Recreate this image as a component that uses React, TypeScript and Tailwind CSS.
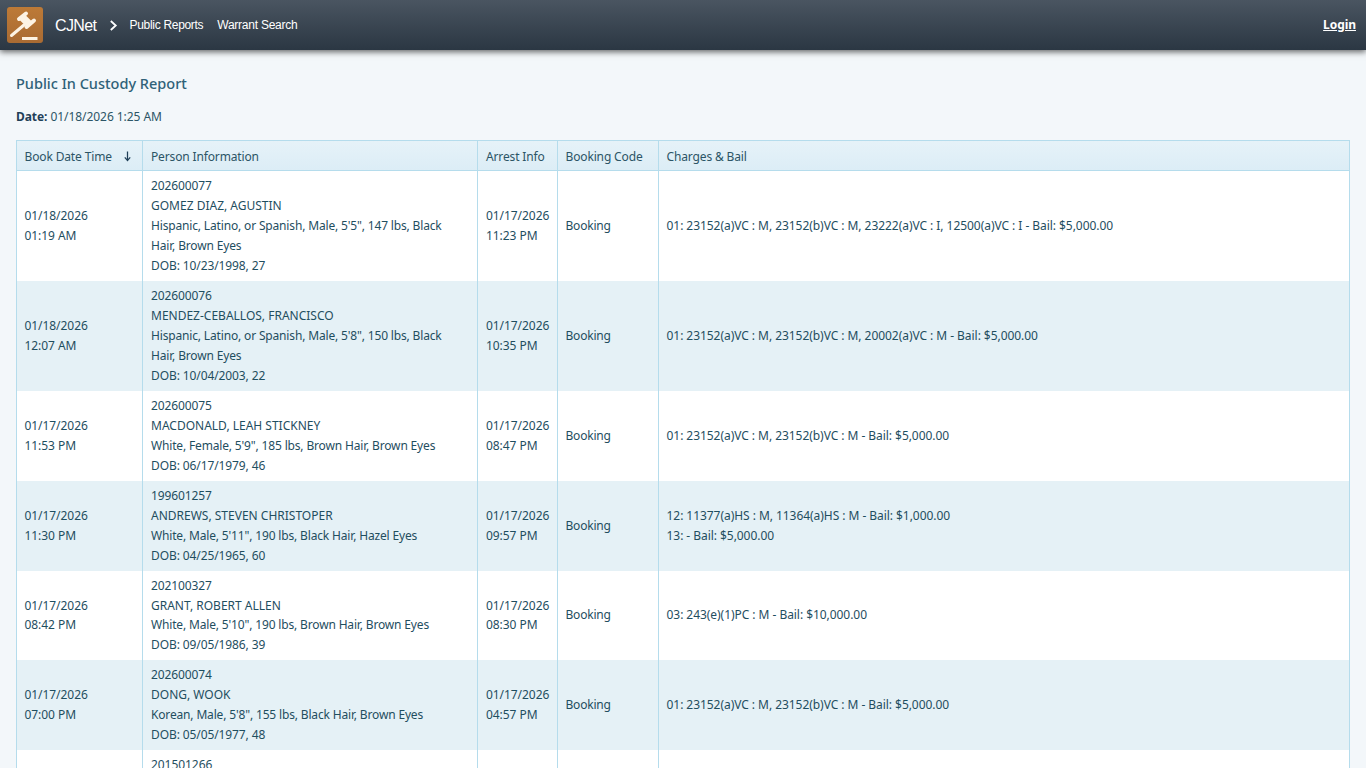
const rows = [
  {
    book: ["01/18/2026", "01:19 AM"],
    person: ["202600077", "GOMEZ DIAZ, AGUSTIN", "Hispanic, Latino, or Spanish, Male, 5'5\", 147 lbs, Black Hair, Brown Eyes", "DOB: 10/23/1998, 27"],
    arrest: ["01/17/2026", "11:23 PM"],
    charges: ["01: 23152(a)VC : M, 23152(b)VC : M, 23222(a)VC : I, 12500(a)VC : I - Bail: $5,000.00"],
  },
  {
    book: ["01/18/2026", "12:07 AM"],
    person: ["202600076", "MENDEZ-CEBALLOS, FRANCISCO", "Hispanic, Latino, or Spanish, Male, 5'8\", 150 lbs, Black Hair, Brown Eyes", "DOB: 10/04/2003, 22"],
    arrest: ["01/17/2026", "10:35 PM"],
    charges: ["01: 23152(a)VC : M, 23152(b)VC : M, 20002(a)VC : M - Bail: $5,000.00"],
  },
  {
    book: ["01/17/2026", "11:53 PM"],
    person: ["202600075", "MACDONALD, LEAH STICKNEY", "White, Female, 5'9\", 185 lbs, Brown Hair, Brown Eyes", "DOB: 06/17/1979, 46"],
    arrest: ["01/17/2026", "08:47 PM"],
    charges: ["01: 23152(a)VC : M, 23152(b)VC : M - Bail: $5,000.00"],
  },
  {
    book: ["01/17/2026", "11:30 PM"],
    person: ["199601257", "ANDREWS, STEVEN CHRISTOPER", "White, Male, 5'11\", 190 lbs, Black Hair, Hazel Eyes", "DOB: 04/25/1965, 60"],
    arrest: ["01/17/2026", "09:57 PM"],
    charges: ["12: 11377(a)HS : M, 11364(a)HS : M - Bail: $1,000.00", "13: - Bail: $5,000.00"],
  },
  {
    book: ["01/17/2026", "08:42 PM"],
    person: ["202100327", "GRANT, ROBERT ALLEN", "White, Male, 5'10\", 190 lbs, Brown Hair, Brown Eyes", "DOB: 09/05/1986, 39"],
    arrest: ["01/17/2026", "08:30 PM"],
    charges: ["03: 243(e)(1)PC : M - Bail: $10,000.00"],
  },
  {
    book: ["01/17/2026", "07:00 PM"],
    person: ["202600074", "DONG, WOOK", "Korean, Male, 5'8\", 155 lbs, Black Hair, Brown Eyes", "DOB: 05/05/1977, 48"],
    arrest: ["01/17/2026", "04:57 PM"],
    charges: ["01: 23152(a)VC : M, 23152(b)VC : M - Bail: $5,000.00"],
  },
]

const th = "border-r border-[#b5dcec] pl-2 pr-1 pt-[2px] font-normal text-left tracking-[-0.14px]"
const td = "border-r border-[#b5dcec] px-2 py-[5px] align-middle"
// name line runs a bit wider than the details line in the original font
const personLine = ["tracking-[-0.1px]", "tracking-[0px]", "tracking-[-0.16px]", "tracking-[-0.1px]"]

const Logo = () => (
  <div className="w-9 h-9 rounded-[3px] bg-gradient-to-b from-[#bd7a37] to-[#a96b33] shrink-0">
    <svg viewBox="0 0 36 36" className="w-9 h-9">
      <g stroke="#fdf3e4" strokeLinecap="round" fill="none">
        <path d="M4.5 28.5 L17 18" strokeWidth="3" />
        <path d="M12 12 L19 6.5" strokeWidth="4" />
        <path d="M19.5 20 L27 13.5" strokeWidth="4" />
        <path d="M15.5 10.5 L22.5 17.5" strokeWidth="7.5" strokeLinecap="butt" />
      </g>
      <rect x="15" y="30" width="15.5" height="3" fill="#fdf3e4" />
    </svg>
  </div>
)

export default function App() {
  return (
    <div className="h-screen overflow-hidden bg-[#f3f7fa] text-[12px] leading-[19.95px] tracking-[-0.06px] text-[#1f4e5f] font-['Noto_Sans',sans-serif]">
      <header className="h-[50px] flex items-center pl-[7px] pr-[10px] bg-gradient-to-b from-[#4a5561] to-[#2b3743] shadow-[0_2px_6px_rgba(0,0,0,0.6)] text-white font-['Liberation_Sans',sans-serif]">
        <Logo />
        <span className="ml-3 pt-px text-[16px] tracking-[-0.6px]">CJNet</span>
        <svg viewBox="0 0 10 12" className="w-[9px] h-[11px] ml-[13px] mt-px">
          <path d="M2 1 L7.5 6 L2 11" fill="none" stroke="#fff" strokeWidth="2" />
        </svg>
        <a className="ml-[11px] pt-px text-[12px] tracking-[-0.3px]">Public Reports</a>
        <a className="ml-[14px] pt-px text-[12px] tracking-[-0.25px]">Warrant Search</a>
        <a className="ml-auto text-[12px] font-bold underline font-['Noto_Sans',sans-serif]">Login</a>
      </header>

      <main className="px-4 pt-[22px]">
        <h1 className="text-[14.5px] leading-[22px] tracking-normal font-medium text-[#2f6178]">Public In Custody Report</h1>
        <p className="mt-[13px] leading-[20px] text-[#2c5566]">
          <b className="text-[#1f4058]">Date:</b> 01/18/2026 1:25 AM
        </p>

        <table className="mt-[13.4px] w-full border-collapse table-fixed border border-[#b5dcec]">
          <colgroup>
            <col className="w-[126px]" />
            <col className="w-[335px]" />
            <col className="w-[80px]" />
            <col className="w-[101px]" />
            <col />
          </colgroup>
          <thead>
            <tr className="h-[30px] bg-gradient-to-b from-[#e6f2f8] to-[#dcedf6] border-b border-[#b5dcec] text-[#2c5566]">
              <th className={th + " !pl-[7.5px]"}>
                <div className="flex items-center justify-between pr-[6px]">
                  Book Date Time
                  <svg viewBox="0 0 10 12" className="w-[9px] h-[11px]">
                    <path d="M5 0.5 V10 M2 7 L5 10.5 L8 7" fill="none" stroke="#1f4058" strokeWidth="1.4" />
                  </svg>
                </div>
              </th>
              <th className={th}>Person Information</th>
              <th className={th}>Arrest Info</th>
              <th className={th + " !pl-[7.5px]"}>Booking Code</th>
              <th className="pl-[7.5px] pt-[2px] font-normal text-left tracking-[-0.14px]">Charges &amp; Bail</th>
            </tr>
          </thead>
          <tbody>
            {rows.map((r, i) => (
              <tr key={r.person[0]} className={i % 2 ? "bg-[#e5f1f6]" : "bg-white"}>
                <td className={td + " !pl-[7.5px]"}>{r.book.map((l) => <div key={l}>{l}</div>)}</td>
                <td className={td + " !pr-4"}>
                  {r.person.map((l, j) => <div key={l} className={personLine[j]}>{l}</div>)}
                </td>
                <td className={td}>{r.arrest.map((l) => <div key={l}>{l}</div>)}</td>
                <td className={td + " !pl-[7.5px] tracking-[-0.2px]"}>Booking</td>
                <td className="pl-[7.5px] pr-2 py-[5px] align-middle tracking-[-0.05px]">{r.charges.map((l) => <div key={l}>{l}</div>)}</td>
              </tr>
            ))}
            <tr className="bg-white">
              <td className={td}></td>
              <td className={td}>201501266</td>
              <td className={td}></td>
              <td className={td}></td>
              <td className="px-2 py-[5px]"></td>
            </tr>
          </tbody>
        </table>
      </main>
    </div>
  )
}
